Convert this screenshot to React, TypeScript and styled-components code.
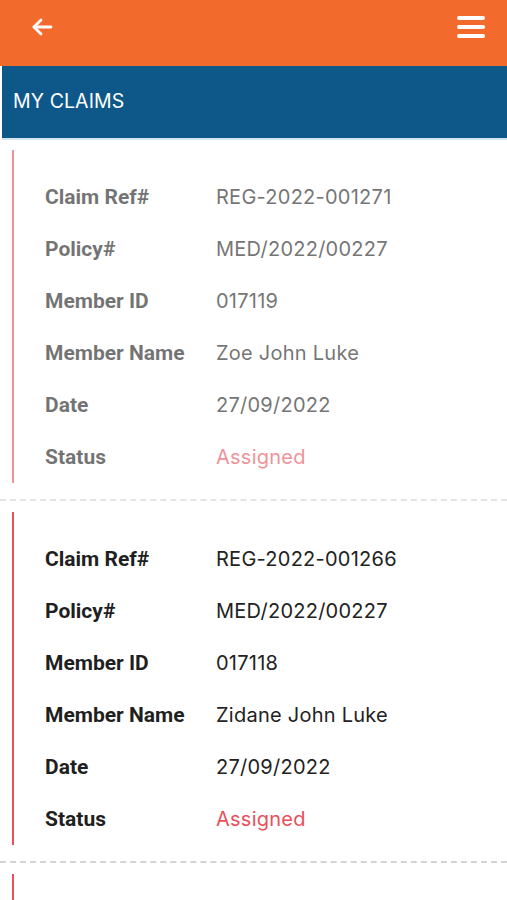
import styled, { createGlobalStyle } from 'styled-components';

const GlobalStyle = createGlobalStyle`
  html, body {
    margin: 0;
    padding: 0;
    background: #ffffff;
  }
  body {
    font-family: 'Inter', 'Noto Sans', sans-serif;
    overflow: hidden;
  }
`;

const Page = styled.div`
  width: 507px;
  height: 900px;
  overflow: hidden;
  background: #ffffff;
`;

const TopBar = styled.header`
  height: 66px;
  background: #f26a2c;
  display: flex;
  align-items: center;
  justify-content: space-between;
  padding: 0 22px 12px 30px;
  box-sizing: border-box;
`;

const IconButton = styled.button`
  border: none;
  background: none;
  padding: 0;
  display: flex;
  color: #ffffff;
`;

const TitleBar = styled.div`
  height: 74px;
  margin-left: 2px;
  background: #0d5888;
  border-bottom: 2px solid #d3e6f2;
  display: flex;
  align-items: center;
  padding-left: 11px;
  box-sizing: border-box;
`;

const Title = styled.h1`
  margin: 0 0 2px;
  font-family: 'Inter', 'Noto Sans', sans-serif;
  font-size: 19.5px;
  font-weight: 400;
  color: #ffffff;
  letter-spacing: 0.1px;
`;

const List = styled.div`
  display: flex;
  flex-direction: column;
  padding-top: 10px;
`;

const Claim = styled.section<{ $faded?: boolean }>`
  opacity: ${({ $faded }) => ($faded ? 0.62 : 1)};
  padding-bottom: 16px;
  border-bottom: 2px dashed #d4d4d4;
  margin-bottom: 11px;
`;

const ClaimBody = styled.div`
  margin-left: 12px;
  border-left: 2.5px solid #e8505b;
  padding: 21px 0 0 31px;
`;

const Row = styled.div`
  display: grid;
  grid-template-columns: 171px 1fr;
  align-items: center;
  height: 52px;
`;

const Label = styled.span`
  font-family: 'Roboto', 'Liberation Sans', sans-serif;
  font-weight: 700;
  font-size: 21px;
  color: #1f1f1f;
`;

const Value = styled.span<{ $status?: boolean }>`
  font-family: 'Inter', 'Noto Sans', sans-serif;
  font-size: 20px;
  font-weight: 400;
  letter-spacing: 0.25px;
  color: ${({ $status }) => ($status ? '#e8505b' : '#222222')};
`;

const BackIcon = () => (
  <svg width="24" height="24" viewBox="0 0 24 24" fill="none" stroke="currentColor" strokeWidth="2.8" strokeLinecap="round" strokeLinejoin="round">
    <path d="M21 12H4" />
    <path d="M11 5l-7 7 7 7" />
  </svg>
);

const MenuIcon = () => (
  <svg width="28" height="24" viewBox="0 0 28 24" fill="none" stroke="currentColor" strokeWidth="4" strokeLinecap="round">
    <path d="M2 3h24" />
    <path d="M2 12h24" />
    <path d="M2 21h24" />
  </svg>
);

const claims = [
  { ref: 'REG-2022-001271', policy: 'MED/2022/00227', member: '017119', name: 'Zoe John Luke', date: '27/09/2022', status: 'Assigned', faded: true },
  { ref: 'REG-2022-001266', policy: 'MED/2022/00227', member: '017118', name: 'Zidane John Luke', date: '27/09/2022', status: 'Assigned', faded: false },
  { ref: 'REG-2022-001265', policy: 'MED/2022/00227', member: '017117', name: 'John Luke', date: '27/09/2022', status: 'Assigned', faded: false },
];

export default function App() {
  return (
    <Page>
      <GlobalStyle />
      <TopBar>
        <IconButton aria-label="Back">
          <BackIcon />
        </IconButton>
        <IconButton aria-label="Menu">
          <MenuIcon />
        </IconButton>
      </TopBar>
      <TitleBar>
        <Title>MY CLAIMS</Title>
      </TitleBar>
      <List>
        {claims.map((c) => (
          <Claim key={c.ref} $faded={c.faded}>
            <ClaimBody>
              <Row>
                <Label>Claim Ref#</Label>
                <Value>{c.ref}</Value>
              </Row>
              <Row>
                <Label>Policy#</Label>
                <Value>{c.policy}</Value>
              </Row>
              <Row>
                <Label>Member ID</Label>
                <Value>{c.member}</Value>
              </Row>
              <Row>
                <Label>Member Name</Label>
                <Value>{c.name}</Value>
              </Row>
              <Row>
                <Label>Date</Label>
                <Value>{c.date}</Value>
              </Row>
              <Row>
                <Label>Status</Label>
                <Value $status>{c.status}</Value>
              </Row>
            </ClaimBody>
          </Claim>
        ))}
      </List>
    </Page>
  );
}
